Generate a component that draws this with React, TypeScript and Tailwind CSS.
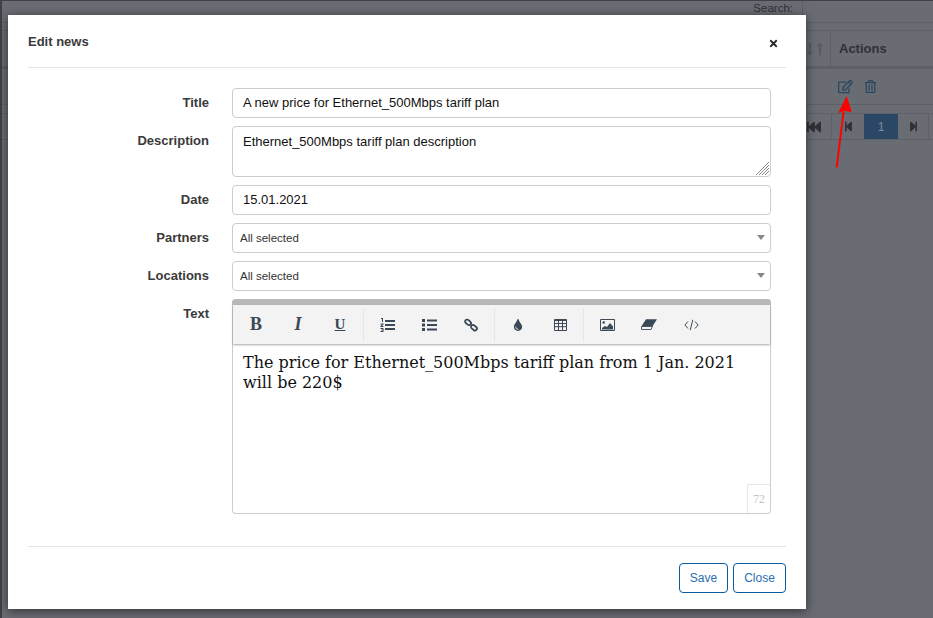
import { FaRegEdit, FaRegTrashAlt, FaFastBackward, FaStepBackward, FaStepForward, FaLongArrowAltDown, FaLongArrowAltUp, FaTint, FaTimes } from "react-icons/fa";

const sans = "font-['Liberation_Sans',Arial,sans-serif]";

function Field({ label, children }: { label: string; children: React.ReactNode }) {
  return (
    <>
      <label className="pt-[7px] text-right text-[13px] leading-[16px] font-bold text-[#3a3a3a]">{label}</label>
      {children}
    </>
  );
}

function TextBox({ value }: { value: string }) {
  return (
    <div className="flex h-[30px] items-center rounded-[4px] border border-[#cccccc] px-[10px] text-[13px] text-[#111111]">
      {value}
    </div>
  );
}

function SelectBox({ value }: { value: string }) {
  return (
    <div className="flex h-[30px] items-center justify-between rounded-[4px] border border-[#cccccc] pr-[5px] pl-[7px] text-[11.5px] text-[#333333]">
      <span className="pt-px">{value}</span>
      <svg width="8" height="5" viewBox="0 0 8 5" className="mb-px">
        <path d="M0 0h8L4 5z" fill="#888888" />
      </svg>
    </div>
  );
}

function ToolButton({ children }: { children: React.ReactNode }) {
  return <div className="flex h-[38px] w-[42px] items-center justify-center text-[#3b4856]">{children}</div>;
}

function Divider() {
  return <div className="mx-[2px] h-[34px] w-px bg-[#e6e6e6]" />;
}

function Toolbar() {
  return (
    <div className="flex h-[39px] items-center bg-[#f3f3f3] pl-[2px] shadow-[0_1px_2px_rgba(0,0,0,0.35)]">
      <ToolButton>
        <span className="font-['Liberation_Serif',serif] text-[18px] font-bold">B</span>
      </ToolButton>
      <ToolButton>
        <span className="font-['Liberation_Serif',serif] text-[18px] font-bold italic">I</span>
      </ToolButton>
      <ToolButton>
        <span className="font-['Liberation_Serif',serif] text-[15px] font-bold underline">U</span>
      </ToolButton>
      <Divider />
      <ToolButton>
        <svg width="15" height="14" viewBox="0 0 15 14" fill="currentColor">
          <path d="M5 2h10v2H5zM5 6h10v2H5zM5 10h10v2H5z" />
          <path d="M1 0h2v4H2V1H1zM0.5 5.5h3v1L2 8h1.5v1h-3V8L2 6.5H.5zM.5 10h3v4h-3v-1h2v-.5h-1v-1h1V11h-2z" />
        </svg>
      </ToolButton>
      <ToolButton>
        <svg width="15" height="12" viewBox="0 0 15 12" fill="currentColor">
          <path d="M0 0h3v3H0zM0 4.500h3v3H0zM0 9h3v3H0zM5 .5h10v2H5zM5 5h10v2H5zM5 9.500h10v2H5z" />
        </svg>
      </ToolButton>
      <ToolButton>
        <svg width="14" height="14" viewBox="0 0 14 14" fill="none" stroke="currentColor" strokeWidth="1.800">
          <rect x="0.800" y="2.300" width="6.500" height="4" rx="2" transform="rotate(40 4 4.300)" />
          <rect x="6.700" y="7.700" width="6.500" height="4" rx="2" transform="rotate(40 10 9.700)" />
        </svg>
      </ToolButton>
      <Divider />
      <ToolButton>
        <FaTint size={12} />
      </ToolButton>
      <ToolButton>
        <svg width="13" height="12" viewBox="0 0 13 12" fill="none" stroke="currentColor">
          <path d="M.5.500h12v11H.500zM.5 1.500h12M.5 4.500h12M.5 7.700h12M4.500 1v10M8.500 1v10" />
        </svg>
      </ToolButton>
      <Divider />
      <ToolButton>
        <svg width="15" height="12" viewBox="0 0 15 12">
          <path d="M.5.500h14v11H.500z" fill="none" stroke="currentColor" />
          <circle cx="3.700" cy="3.500" r="1.300" fill="currentColor" />
          <path d="M2 10.500V9l3-2 2 1 3-4 3 3.500v3z" fill="currentColor" />
        </svg>
      </ToolButton>
      <ToolButton>
        <svg width="16" height="11" viewBox="0 0 16 11">
          <path d="M5 .3h11l-4.500 7H.5z" fill="currentColor" />
          <path d="M.5 7.500h11L10 10.500H.5z" fill="none" stroke="currentColor" strokeWidth="0.900" />
        </svg>
      </ToolButton>
      <ToolButton>
        <svg width="15" height="12" viewBox="0 0 15 12" fill="none" stroke="currentColor" strokeWidth="1">
          <path d="M4 2.500.9 6 4 9.500M11 2.500 14.100 6 11 9.500M8.800.8 6.200 11.200" />
        </svg>
      </ToolButton>
    </div>
  );
}

// dimmed datatable that sits behind the dialog
function PageBehind() {
  return (
    <div className="flex h-full flex-col border-t border-l-2 border-[#3f4145] bg-[#696c73] text-[#2f3136]">
      <div className="flex h-[22px] justify-end border-b border-[#5d6066]">
        <span className="mt-[-1px] mr-[9px] text-[11.500px] leading-[16px]">Search:</span>
        <div className="w-[131px] border-l border-[#5d6066]" />
      </div>
      <div className="mt-[7px] flex h-[36px] justify-end border-t border-[#5d6066]">
        <div className="flex w-[30px] items-center justify-start border-r border-[#5d6066] pl-[2px] text-[#5a5d63]">
          <FaLongArrowAltDown size={14} />
          <FaLongArrowAltUp size={14} className="-ml-[4px]" />
        </div>
        <div className="flex w-[102px] items-center pl-[8px] text-[13px] font-bold text-[#2f3136]">Actions</div>
      </div>
      <div className="h-[3px] bg-[#5d6066]" />
      <div className="flex h-[36px] justify-end border-b border-[#5d6066]">
        <div className="flex w-[102px] items-center gap-[11px] pl-[7px] text-[#2a4560]">
          <FaRegEdit size={15} />
          <FaRegTrashAlt size={13} />
        </div>
      </div>
      <div className="mt-[8px] flex h-[27px] justify-end border-y border-[#5d6066]">
        <div className="flex w-[26px] items-center justify-start border-r border-[#5d6066] pl-[1px]">
          <FaFastBackward size={14} />
        </div>
        <div className="flex w-[32px] items-center justify-center">
          <FaStepBackward size={11} />
        </div>
        <div className="flex w-[34px] items-center justify-center bg-[#2a4766] text-[12px] text-[#7f8a98]">1</div>
        <div className="flex w-[31px] items-center justify-center border-r border-[#5d6066]">
          <FaStepForward size={11} />
        </div>
        <div className="w-[4px]" />
      </div>
    </div>
  );
}

export default function App() {
  return (
    <div className={`relative h-[618px] w-[933px] overflow-hidden ${sans}`}>
      <PageBehind />

      <svg width="30" height="80" viewBox="0 0 30 80" className="absolute top-[92px] left-[830px]">
        <path d="M6.700 75.500 13.500 20" stroke="#f00" strokeWidth="2" fill="none" />
        <path d="M16.700 4 8 21l7-2 6.700 1z" fill="#f00" />
      </svg>

      <div className="absolute top-[15px] left-[8px] flex h-[594px] w-[798px] flex-col bg-white px-[20px] shadow-[0_2px_10px_rgba(0,0,0,0.55)]">
        <div className="flex h-[53px] items-center justify-between border-b border-[#e3e3e3] pt-[1px] pr-[7px]">
          <h4 className="text-[13px] font-bold text-[#3a3a3a]">Edit news</h4>
          <FaTimes size={11} className="mt-[3px] text-[#2a2a2a]" />
        </div>

        <div className="mt-[20px] grid grid-cols-[181px_539px] gap-x-[23px] gap-y-[8px]">
          <Field label="Title">
            <TextBox value="A new price for Ethernet_500Mbps tariff plan" />
          </Field>
          <Field label="Description">
            <div className="relative h-[51px] rounded-[4px] border border-[#cccccc] px-[10px] pt-[6px] text-[13px] leading-[18px] text-[#111111]">
              Ethernet_500Mbps tariff plan description
              <svg width="14" height="14" viewBox="0 0 14 14" className="absolute right-[1px] bottom-[1px]" stroke="#8a8a8a">
                <path d="M1 14 14 1M4 14 14 4M7 14l7-7M10 14l4-4" />
              </svg>
            </div>
          </Field>
          <Field label="Date">
            <TextBox value="15.01.2021" />
          </Field>
          <Field label="Partners">
            <SelectBox value="All selected" />
          </Field>
          <Field label="Locations">
            <SelectBox value="All selected" />
          </Field>
          <Field label="Text">
            <div className="relative flex h-[215px] flex-col rounded-[4px] border-x border-b border-[#cccccc]">
              <div className="-mx-px h-[6px] rounded-t-[4px] bg-[#b8b8b8]" />
              <Toolbar />
              <div className="px-[10px] pt-[9px] font-['DejaVu_Serif',serif] text-[16px] leading-[20px] text-[#111111]">
                The price for Ethernet_500Mbps tariff plan from 1 Jan. 2021 will be 220$
              </div>
              <div className="absolute right-0 bottom-0 flex h-[29px] w-[23px] items-center justify-center border-t border-l border-[#e8e8e8] font-['Liberation_Serif',serif] text-[12px] text-[#c4c4c4]">
                72
              </div>
            </div>
          </Field>
        </div>

        <div className="mt-[32px] flex h-[63px] items-start justify-end gap-[5px] border-t border-[#e3e3e3] pt-[16px]">
          <button className="h-[30px] w-[49px] rounded-[4px] border border-[#0a5a9c] text-[12px] text-[#2a6eb0]">Save</button>
          <button className="h-[30px] w-[53px] rounded-[4px] border border-[#0a5a9c] text-[12px] text-[#2a6eb0]">Close</button>
        </div>
      </div>
    </div>
  );
}
